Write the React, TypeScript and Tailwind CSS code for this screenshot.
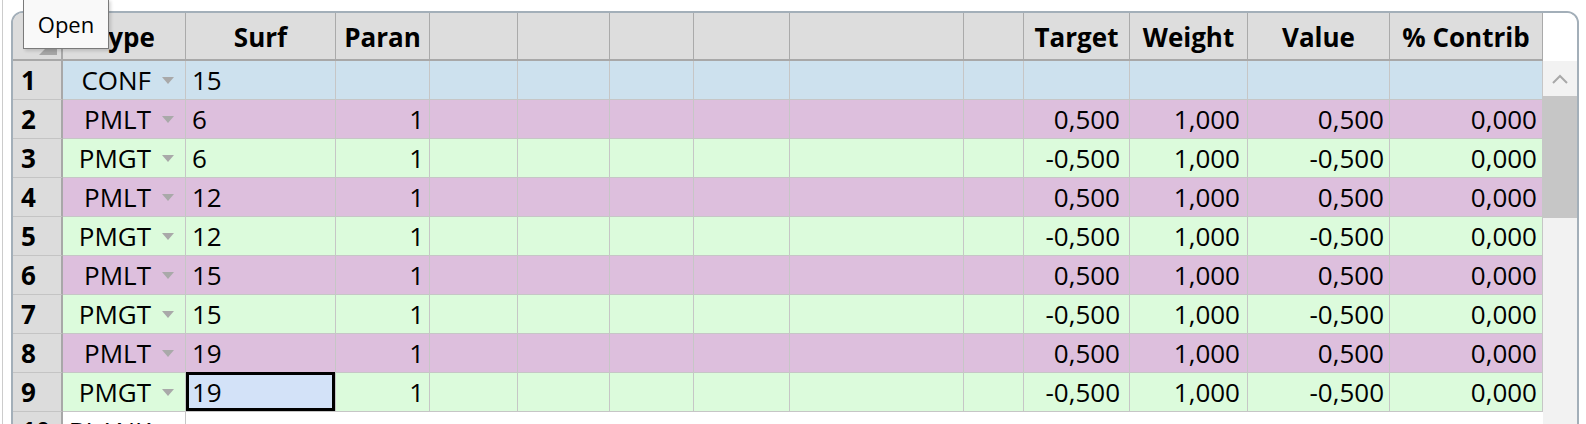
import React from 'react';

type Kind = 'CONF' | 'PMLT' | 'PMGT';

interface Row {
  n: number;
  type: Kind;
  surf: string;
  paran?: string;
  target?: string;
  weight?: string;
  value?: string;
  contrib?: string;
  selected?: boolean;
}

// column widths include the right grid line
const COLS =
  'grid-cols-[50px_123px_150px_94px_88px_92px_84px_96px_174px_60px_106px_118px_142px_153px]';

const lt = { paran: '1', target: '0,500', weight: '1,000', value: '0,500', contrib: '0,000' };
const gt = { paran: '1', target: '-0,500', weight: '1,000', value: '-0,500', contrib: '0,000' };

const rows: Row[] = [
  { n: 1, type: 'CONF', surf: '15' },
  { n: 2, type: 'PMLT', surf: '6', ...lt },
  { n: 3, type: 'PMGT', surf: '6', ...gt },
  { n: 4, type: 'PMLT', surf: '12', ...lt },
  { n: 5, type: 'PMGT', surf: '12', ...gt },
  { n: 6, type: 'PMLT', surf: '15', ...lt },
  { n: 7, type: 'PMGT', surf: '15', ...gt },
  { n: 8, type: 'PMLT', surf: '19', ...lt },
  { n: 9, type: 'PMGT', surf: '19', ...gt, selected: true },
];

const rowBg: Record<Kind, string> = {
  CONF: 'bg-[#cde1ee]',
  PMLT: 'bg-[#ddbfdd]',
  PMGT: 'bg-[#dcfbdc]',
};

const headers = ['Type', 'Surf', 'Paran', '', '', '', '', '', '', 'Target', 'Weight', 'Value', '% Contrib'];

function DropArrow() {
  return (
    <span className="flex w-[34px] justify-center">
      <svg width="12" height="7" viewBox="0 0 12 7">
        <polygon points="0,0 12,0 6,7" fill="#a9a9a9" />
      </svg>
    </span>
  );
}

function HeaderRow() {
  return (
    <div className={`grid h-[48px] ${COLS} border-b-2 border-[#a8a8a8] bg-[#dddddd] font-bold`}>
      <div className="relative border-r-2 border-[#a8a8a8] bg-[#dcdcdc]">
        <svg className="absolute right-[4px] bottom-[4px]" width="18" height="18" viewBox="0 0 18 18">
          <polygon points="0,18 18,18 18,0" fill="#a6a6a6" />
        </svg>
      </div>
      {headers.map((h, i) => (
        <div
          key={i}
          className="flex items-center justify-center overflow-hidden whitespace-nowrap border-r border-[#aaaaaa] pt-[3px]"
        >
          {h}
        </div>
      ))}
    </div>
  );
}

function DataRow({ row }: { row: Row }) {
  const bg = rowBg[row.type];
  const base = 'flex items-center border-r border-b border-[#c6c6c6]';
  const cell = `${base} ${bg}`;
  const num = `${cell} justify-end`;

  return (
    <div className={`grid h-[39px] ${COLS}`}>
      <div className="flex items-center border-r-2 border-b border-[#c4c4c4] border-r-[#a8a8a8] bg-[#dcdcdc] pl-[8px] font-bold">
        {row.n}
      </div>
      <div className={`${cell} justify-end`}>
        <span>{row.type}</span>
        <DropArrow />
      </div>
      <div className={`${base} relative pl-[6px] ${row.selected ? 'bg-[#d3e2f8]' : bg}`}>
        {row.surf}
        {row.selected && (
          <div className="absolute -top-px left-0 right-0 bottom-0 border-[3px] border-black" />
        )}
      </div>
      <div className={`${num} pr-[5px]`}>{row.paran}</div>
      <div className={cell} />
      <div className={cell} />
      <div className={cell} />
      <div className={cell} />
      <div className={cell} />
      <div className={cell} />
      <div className={`${num} pr-[9px]`}>{row.target}</div>
      <div className={`${num} pr-[7px]`}>{row.weight}</div>
      <div className={`${num} pr-[5px]`}>{row.value}</div>
      <div className={`${num} pr-[5px]`}>{row.contrib}</div>
    </div>
  );
}

function BlankRow() {
  return (
    <div className={`grid h-[39px] ${COLS}`}>
      <div className="flex items-center border-r-2 border-[#a8a8a8] bg-[#dcdcdc] pl-[8px] font-bold">10</div>
      <div className="flex items-center justify-end border-r border-[#c6c6c6] bg-white">
        <span>BLANK</span>
        <DropArrow />
      </div>
      <div className="col-span-12 bg-white" />
    </div>
  );
}

function ScrollBar() {
  return (
    <div className="flex w-[34px] flex-col">
      <div className="h-[48px] bg-white" />
      <div className="flex h-[35px] items-center justify-center bg-[#f2f2f2]">
        <svg width="16" height="10" viewBox="0 0 16 10">
          <polyline points="1,9 8,2 15,9" fill="none" stroke="#a8a8a8" strokeWidth="2" />
        </svg>
      </div>
      <div className="h-[122px] bg-[#c6c6c6]" />
      <div className="flex-1 bg-[#f2f2f2]" />
    </div>
  );
}

export default function App() {
  return (
    <div className="relative h-[424px] w-[1586px] overflow-hidden bg-white font-['Open_Sans',sans-serif] text-[26px] leading-[1.25] text-black">
      <div className="ml-[2px] h-full border-l border-[#cccccc] pt-[11px] pl-[8px]">
        <div className="flex h-[430px] w-[1568px] overflow-hidden rounded-t-[12px] border-2 border-[#a3afb9]">
          <div className="w-[1530px]">
            <HeaderRow />
            {rows.map((r) => (
              <DataRow key={r.n} row={r} />
            ))}
            <BlankRow />
          </div>
          <ScrollBar />
        </div>
      </div>

      <div className="absolute left-[23px] top-[-1px] flex h-[50px] w-[86px] items-center justify-center border border-[#7a7a7a] bg-[#f9f9f9] pt-[2px] text-[22px] shadow-[2px_2px_3px_rgba(0,0,0,0.15)]">
        Open
      </div>
    </div>
  );
}
